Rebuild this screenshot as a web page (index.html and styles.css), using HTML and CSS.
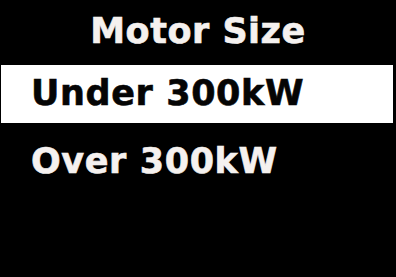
FILE: index.html
```html
<!DOCTYPE html>
<html lang="en">

<head>
    <meta charset="UTF-8" />
    <meta name="viewport" content="width=device-width, initial-scale=1.0" />
    <title>Motor Size</title>
    <link rel="stylesheet" href="styles.css">
</head>

<body>
    <div class="screen">
        <h1 class="title">Motor Size</h1>

        <!-- Options list -->
        <ul class="menu">
            <li class="item selected">Under 300kW</li>
            <li class="item">Over 300kW</li>
        </ul>
    </div>
</body>

</html>
```

FILE: styles.css
```css
html,
body {
    margin: 0;
    padding: 0;
    background: #000;
}

.screen {
    width: 396px;
    height: 277px;
    box-sizing: border-box;
    background: #000;
    color: #f5f1ef;
    font-family: "DejaVu Sans", sans-serif;
    font-weight: bold;
    overflow: hidden;
}

.title {
    margin: 11px 0 0;
    font-size: 35px;
    line-height: 40px;
    font-weight: bold;
    text-align: center;
    letter-spacing: 0.5px;
    -webkit-text-stroke: 0.6px currentColor;
}

.menu {
    list-style: none;
    margin: 14px 3px 0 1px;
    padding: 0;
    display: flex;
    flex-direction: column;
    gap: 10px;
}

.item {
    font-size: 35px;
    line-height: 56px;
    padding: 0 0 2px 30px;
    letter-spacing: 0.6px;
    -webkit-text-stroke: 0.6px currentColor;
}

.selected {
    background: #fff;
    color: #050505;
}
```
